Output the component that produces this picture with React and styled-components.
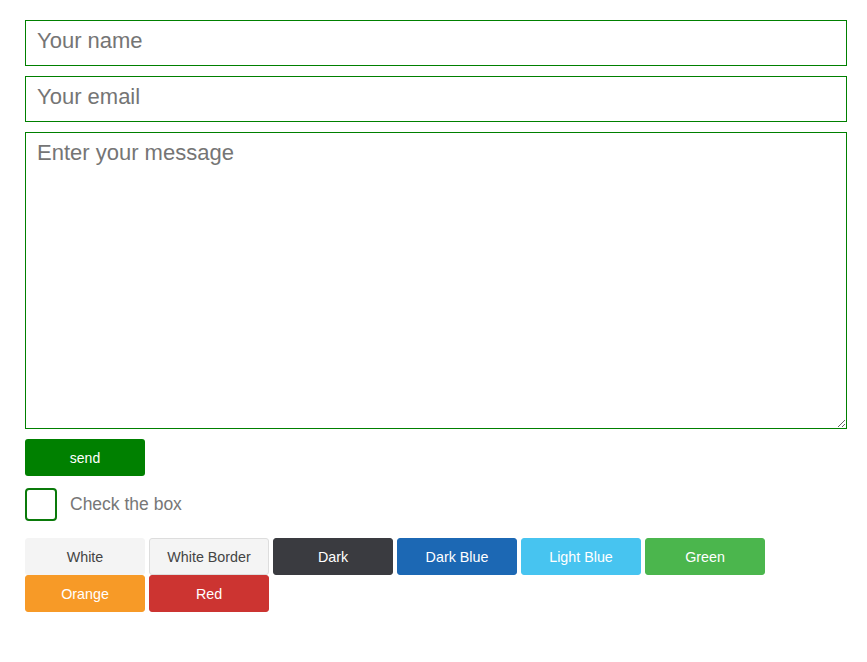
import React from 'react';
import styled, { createGlobalStyle } from 'styled-components';

const GlobalStyle = createGlobalStyle`
  body {
    margin: 0;
    font-family: "Liberation Sans", Arial, sans-serif;
    background: #fff;
  }
`;

const Form = styled.form`
  display: flex;
  flex-direction: column;
  padding: 20px 20px 0 25px;
`;

const Field = styled.input`
  box-sizing: border-box;
  width: 100%;
  height: 46px;
  margin: 0 0 10px;
  padding: 0 11px 4px;
  border: 1px solid #008000;
  border-radius: 0;
  font-family: "Liberation Sans", Arial, sans-serif;
  font-size: 22px;
  color: #333;
  outline: none;

  &::placeholder {
    color: #757575;
  }
`;

const Message = styled.textarea`
  box-sizing: border-box;
  display: block;
  width: 100%;
  height: 297px;
  margin: 0 0 10px;
  padding: 7px 11px;
  border: 1px solid #008000;
  border-radius: 0;
  font-family: "Liberation Sans", Arial, sans-serif;
  font-size: 22px;
  color: #333;
  outline: none;
  resize: both;

  &::placeholder {
    color: #757575;
  }
`;

const SendButton = styled.button`
  width: 120px;
  height: 37px;
  border: none;
  border-radius: 3px;
  background: #008000;
  color: #fff;
  font-family: "Liberation Sans", Arial, sans-serif;
  font-size: 14px;
  cursor: pointer;
`;

const CheckRow = styled.label`
  display: flex;
  align-items: center;
  gap: 13px;
  margin-top: 12px;
  color: #777;
  font-size: 17.5px;
`;

const Box = styled.span`
  box-sizing: border-box;
  width: 32px;
  height: 33px;
  border: 2px solid #0a7a0a;
  border-radius: 4px;
  background: #fff;
`;

const Palette = styled.div`
  display: flex;
  flex-wrap: wrap;
  column-gap: 4px;
  max-width: 744px;
  margin-top: 17px;
`;

const Swatch = styled.button`
  box-sizing: border-box;
  width: 120px;
  height: 37px;
  border: 1px solid ${p => p.$border || p.$bg};
  border-radius: 3px;
  background: ${p => p.$bg};
  color: ${p => p.$fg};
  font-family: "Liberation Sans", Arial, sans-serif;
  font-size: 14.3px;
  cursor: pointer;
`;

const swatches = [
  { label: 'White', bg: '#f4f4f4', fg: '#444', border: '#f4f4f4' },
  { label: 'White Border', bg: '#f4f4f4', fg: '#444', border: '#dddddd' },
  { label: 'Dark', bg: '#3a3b40', fg: '#fff' },
  { label: 'Dark Blue', bg: '#1c68b4', fg: '#fff' },
  { label: 'Light Blue', bg: '#47c4f0', fg: '#fff' },
  { label: 'Green', bg: '#4bb64d', fg: '#fff' },
  { label: 'Orange', bg: '#f79a27', fg: '#fff' },
  { label: 'Red', bg: '#cc3431', fg: '#fff' },
];

const App = () => (
  <>
    <GlobalStyle />
    <Form onSubmit={e => e.preventDefault()}>
      <Field type="text" placeholder="Your name" />
      <Field type="email" placeholder="Your email" />
      <Message placeholder="Enter your message" />
      <SendButton type="submit">send</SendButton>
      <CheckRow>
        <Box />
        Check the box
      </CheckRow>
      <Palette>
        {swatches.map(s => (
          <Swatch key={s.label} type="button" $bg={s.bg} $fg={s.fg} $border={s.border}>
            {s.label}
          </Swatch>
        ))}
      </Palette>
    </Form>
  </>
);

export default App;
